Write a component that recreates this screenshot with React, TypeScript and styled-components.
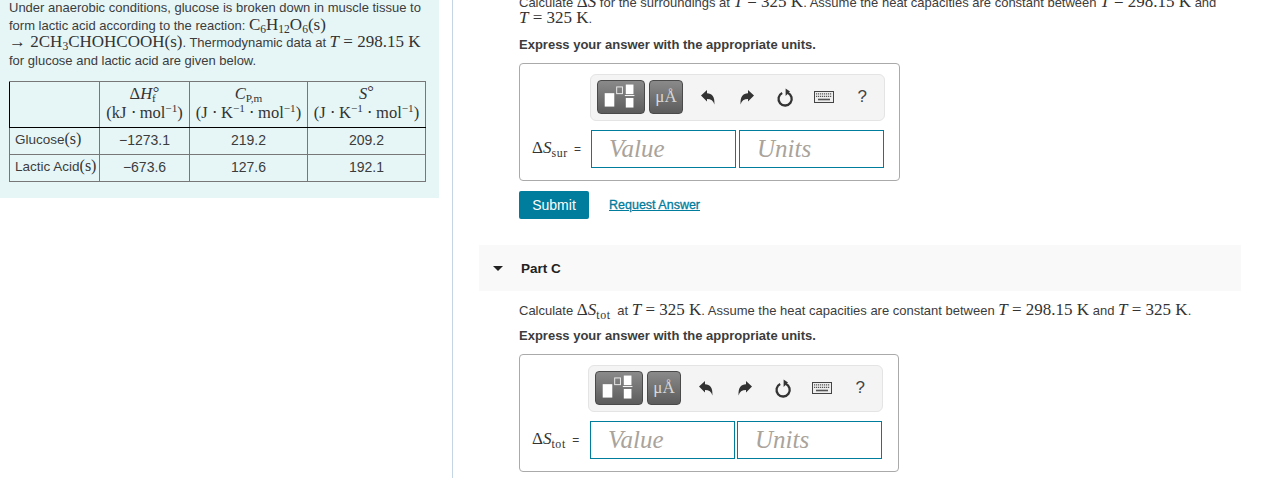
import styled, { createGlobalStyle } from 'styled-components';
import type { ReactNode } from 'react';

const GlobalStyle = createGlobalStyle`
  html, body {
    margin: 0;
    padding: 0;
    background: #fff;
  }
  body {
    font-family: 'Liberation Sans', Arial, sans-serif;
    font-size: 13px;
    color: #3c3c3c;
  }
`;

const Page = styled.div`
  display: flex;
  width: 1266px;
  height: 478px;
  overflow: hidden;
`;

const LeftPane = styled.aside`
  flex: none;
  width: 452px;
  height: 478px;
  border-right: 1px solid #c4d5e4;
`;

const Passage = styled.div`
  width: 439px;
  height: 198px;
  box-sizing: border-box;
  padding: 0 9px;
  background: #e6f6f7;
  overflow: hidden;
`;

const PassageText = styled.p`
  margin: -1px 0 11px;
  font-size: 13px;
  line-height: 17.7px;
  white-space: nowrap;
`;

const Mi = styled.span<{ $size?: number }>`
  font-family: 'Liberation Serif', 'Times New Roman', serif;
  font-size: ${(p) => p.$size ?? 17}px;
  line-height: 0;
  color: #333;
`;

const Var = styled.i`
  font-family: 'Liberation Serif', serif;
`;

const Sub = styled.sub`
  font-size: 0.68em;
  line-height: 0;
  vertical-align: -0.3em;
`;

// the long subscripts under delta S run wider in the reference
const WordSub = styled(Sub)`
  font-size: 0.7em;
  letter-spacing: 0.6px;
  margin-right: 3px;
`;

const Sup = styled.sup`
  font-size: 0.68em;
  line-height: 0;
  vertical-align: 0.55em;
`;

const Degree = styled.span<{ $shift?: number }>`
  margin-left: ${(p) => p.$shift ?? 0}px;
  font-size: 1em;
  line-height: 0;
  vertical-align: 0.1em;
`;

const DataTable = styled.table`
  width: 417px;
  border-collapse: collapse;
  table-layout: fixed;
  border: 1px solid #000;
  font-size: 14px;
`;

const HeadCell = styled.th`
  height: 45px;
  padding: 0;
  border: 1px solid #777;
  border-bottom: 1px solid #000;
  font-weight: 400;
  text-align: center;
  line-height: 19px;
  white-space: nowrap;
  &:first-child { border-left-color: #000; }
`;

const BodyCell = styled.td`
  height: 24px;
  padding: 0 0 2px;
  border: 1px solid #777;
  text-align: center;
  line-height: 18px;
  white-space: nowrap;
  &:first-child {
    padding-left: 5px;
    text-align: left;
    font-size: 13.5px;
  }
`;

const RightPane = styled.main`
  flex: 1;
  min-width: 0;
`;

const PartBody = styled.section`
  padding-left: 66px;
  width: 720px;
`;

const ClippedText = styled.p`
  margin: -5px 0 0;
  line-height: 16px;
  white-space: nowrap;
`;

const Prompt = styled.p`
  margin: 0;
  line-height: 17px;
  white-space: nowrap;
`;

const Instruction = styled.p<{ $top: number }>`
  margin: ${(p) => p.$top}px 0 10px;
  font-weight: 700;
  font-size: 13px;
  line-height: 17px;
`;

const AnswerBox = styled.div<{ $width: number }>`
  box-sizing: border-box;
  width: ${(p) => p.$width}px;
  height: 118px;
  padding-top: 10px;
  border: 1px solid #aaa;
  border-radius: 4px;
`;

const Toolbar = styled.div<{ $left: number }>`
  display: flex;
  align-items: flex-start;
  box-sizing: border-box;
  width: 295px;
  height: 47px;
  margin-left: ${(p) => p.$left}px;
  padding: 5px 0 0 6px;
  background: #f4f4f4;
  border: 1px solid #e4e4e4;
  border-radius: 6px;
`;

const PaletteButton = styled.button<{ $width: number }>`
  display: flex;
  align-items: center;
  justify-content: center;
  box-sizing: border-box;
  width: ${(p) => p.$width}px;
  height: 34px;
  margin-right: 4px;
  padding: 0;
  background: linear-gradient(#8a8a8a, #5c5c5c);
  border: 1px solid #4a4a4a;
  border-radius: 4px;
`;

const UnitGlyph = styled.span`
  font-family: 'Liberation Serif', serif;
  font-size: 17px;
  color: #d8d8d8;
`;

const ToolIcon = styled.span`
  display: flex;
  flex: none;
  align-items: center;
  justify-content: center;
  width: 38.5px;
  height: 34px;
  color: #444;
  font-size: 17px;
`;

const ToolIcons = styled.div`
  display: flex;
  margin-left: 2px;
`;

const InputRow = styled.div<{ $gap: number }>`
  display: flex;
  align-items: center;
  gap: ${(p) => p.$gap}px;
  margin-top: 9px;
`;

const Symbol = styled.label<{ $width: number }>`
  flex: none;
  box-sizing: border-box;
  width: ${(p) => p.$width}px;
  padding-left: 12px;
  white-space: nowrap;
  font-size: 12px;
`;

const Field = styled.div`
  box-sizing: border-box;
  width: 145px;
  height: 38px;
  padding-left: 17px;
  border: 1px solid #007c9c;
  font: italic 25px/35px 'Liberation Serif', serif;
  color: #a9a39b;
`;

const Actions = styled.div`
  display: flex;
  align-items: center;
  gap: 20px;
  margin-top: 10px;
`;

const SubmitButton = styled.button`
  width: 70px;
  height: 28px;
  padding: 0;
  background: #007c9c;
  border: none;
  border-radius: 2px;
  color: #fff;
  font: 14px 'Liberation Sans', Arial, sans-serif;
`;

const RequestLink = styled.a`
  color: #007c9c;
  font-size: 12.5px;
  font-weight: 400;
  text-decoration: underline;
  -webkit-text-stroke: 0.3px #007c9c;
`;

const PartHeader = styled.header`
  display: flex;
  align-items: center;
  width: 762px;
  height: 46px;
  margin: 26px 0 11px 26px;
  padding-left: 14px;
  box-sizing: border-box;
  background: #f9f9f9;
  font-size: 13.5px;
  font-weight: 700;
  color: #222;
`;

const Caret = styled.span`
  width: 0;
  height: 0;
  margin-right: 18px;
  border-top: 5px solid #222;
  border-left: 5px solid transparent;
  border-right: 5px solid transparent;
`;

function TemplateIcon() {
  return (
    <svg width="48" height="34" viewBox="0 0 48 34" aria-hidden="true">
      <rect x="7" y="13" width="10" height="14" fill="#fff" />
      <rect x="19.5" y="6.5" width="6" height="7" fill="none" stroke="#eee" />
      <rect x="29" y="4" width="8" height="10" fill="#fff" />
      <rect x="28" y="15" width="10" height="1" fill="#fff" />
      <rect x="29" y="18" width="8" height="10" fill="#fff" />
    </svg>
  );
}

function UndoIcon({ flip = false }: { flip?: boolean }) {
  return (
    <svg width="14" height="15" viewBox="0 0 14 15" aria-hidden="true" style={{ transform: flip ? 'scaleX(-1)' : undefined }}>
      <path d="M0 5.5 6 0v3.2c5 .2 8 3.4 7.4 11.3C12.4 10.8 10 9 6 9v2.6z" fill="#333" />
    </svg>
  );
}

function ResetIcon() {
  return (
    <svg width="18" height="19" viewBox="0 0 18 19" aria-hidden="true">
      <path d="M6.2 5a6.6 6.6 0 1 0 5.4-.2" fill="none" stroke="#333" strokeWidth="2.3" />
      <path d="M9.6 0.5v7.4l4.4-4.4z" fill="#333" />
    </svg>
  );
}

function KeyboardIcon() {
  return (
    <svg width="20" height="12" viewBox="0 0 20 12" aria-hidden="true">
      <rect x="0.5" y="0.5" width="19" height="11" fill="#eee" stroke="#444" />
      <path d="M2 2.8h16M2 5.3h16" stroke="#555" strokeWidth="1.2" strokeDasharray="1.2 .8" />
      <path d="M4 8.5h12" stroke="#555" strokeWidth="1.6" />
    </svg>
  );
}

function AnswerTools({ left }: { left: number }) {
  return (
    <Toolbar $left={left}>
      <PaletteButton $width={48}>
        <TemplateIcon />
      </PaletteButton>
      <PaletteButton $width={34}>
        <UnitGlyph>μÅ</UnitGlyph>
      </PaletteButton>
      <ToolIcons>
        <ToolIcon><UndoIcon /></ToolIcon>
        <ToolIcon><UndoIcon flip /></ToolIcon>
        <ToolIcon><ResetIcon /></ToolIcon>
        <ToolIcon><KeyboardIcon /></ToolIcon>
        <ToolIcon>?</ToolIcon>
      </ToolIcons>
    </Toolbar>
  );
}

function Answer(props: { width: number; left: number; gap: number; label: ReactNode }) {
  return (
    <AnswerBox $width={props.width}>
      <AnswerTools left={props.left} />
      <InputRow $gap={props.gap}>
        <Symbol $width={68}>
          {props.label} =
        </Symbol>
        <Field>Value</Field>
        <Field>Units</Field>
      </InputRow>
    </AnswerBox>
  );
}

const rows = [
  { name: 'Glucose', h: '−1273.1', cp: '219.2', s: '209.2' },
  { name: 'Lactic Acid', h: '−673.6', cp: '127.6', s: '192.1' },
];

const perKelvin = (
  <Mi $size={16.5}>
    (J ⋅ K<Sup>−1</Sup> ⋅ mol<Sup>−1</Sup>)
  </Mi>
);

export default function App() {
  return (
    <Page>
      <GlobalStyle />
      <LeftPane>
        <Passage>
          <PassageText>
            Under anaerobic conditions, glucose is broken down in muscle tissue to
            <br />
            form lactic acid according to the reaction: <Mi>C<Sub>6</Sub>H<Sub>12</Sub>O<Sub>6</Sub>(s)</Mi>
            <br />
            <Mi>→ 2CH<Sub>3</Sub>CHOHCOOH(s)</Mi>. Thermodynamic data at <Mi><Var>T</Var> = 298.15 K</Mi>
            <br />
            for glucose and lactic acid are given below.
          </PassageText>
          <DataTable>
            <colgroup>
              <col width="90" />
              <col width="90" />
              <col width="118" />
              <col width="118" />
            </colgroup>
            <thead>
              <tr>
                <HeadCell />
                <HeadCell>
                  <Mi $size={16.5}>Δ<Var>H</Var><Sub>f</Sub><Degree $shift={-3}>°</Degree></Mi>
                  <br />
                  <Mi $size={16.5}>(kJ ⋅ mol<Sup>−1</Sup>)</Mi>
                </HeadCell>
                <HeadCell>
                  <Mi $size={16.5}><Var>C</Var><Sub>P,m</Sub></Mi>
                  <br />
                  {perKelvin}
                </HeadCell>
                <HeadCell>
                  <Mi $size={16.5}><Var>S</Var><Degree>°</Degree></Mi>
                  <br />
                  {perKelvin}
                </HeadCell>
              </tr>
            </thead>
            <tbody>
              {rows.map((row) => (
                <tr key={row.name}>
                  <BodyCell>{row.name}<Mi $size={16}>(s)</Mi></BodyCell>
                  <BodyCell>{row.h}</BodyCell>
                  <BodyCell>{row.cp}</BodyCell>
                  <BodyCell>{row.s}</BodyCell>
                </tr>
              ))}
            </tbody>
          </DataTable>
        </Passage>
      </LeftPane>
      <RightPane>
        <PartBody>
          <ClippedText>
            Calculate <Mi>Δ<Var>S</Var></Mi> for the surroundings at <Mi><Var>T</Var> = 325 K</Mi>. Assume the heat capacities are constant between <Mi><Var>T</Var> = 298.15 K</Mi> and
            <br />
            <Mi><Var>T</Var> = 325 K</Mi>.
          </ClippedText>
          <Instruction $top={9}>Express your answer with the appropriate units.</Instruction>
          <Answer
            width={381}
            left={70}
            gap={3}
            label={<Mi $size={17}>Δ<Var>S</Var><WordSub>sur</WordSub></Mi>}
          />
          <Actions>
            <SubmitButton>Submit</SubmitButton>
            <RequestLink>Request Answer</RequestLink>
          </Actions>
        </PartBody>
        <PartHeader>
          <Caret />
          Part C
        </PartHeader>
        <PartBody>
          <Prompt>
            Calculate <Mi>Δ<Var>S</Var><WordSub>tot</WordSub></Mi> at <Mi><Var>T</Var> = 325 K</Mi>. Assume the heat capacities are constant between <Mi><Var>T</Var> = 298.15 K</Mi> and <Mi><Var>T</Var> = 325 K</Mi>.
          </Prompt>
          <Instruction $top={8}>Express your answer with the appropriate units.</Instruction>
          <Answer
            width={380}
            left={68}
            gap={2}
            label={<Mi $size={17}>Δ<Var>S</Var><WordSub>tot</WordSub></Mi>}
          />
        </PartBody>
      </RightPane>
    </Page>
  );
}
